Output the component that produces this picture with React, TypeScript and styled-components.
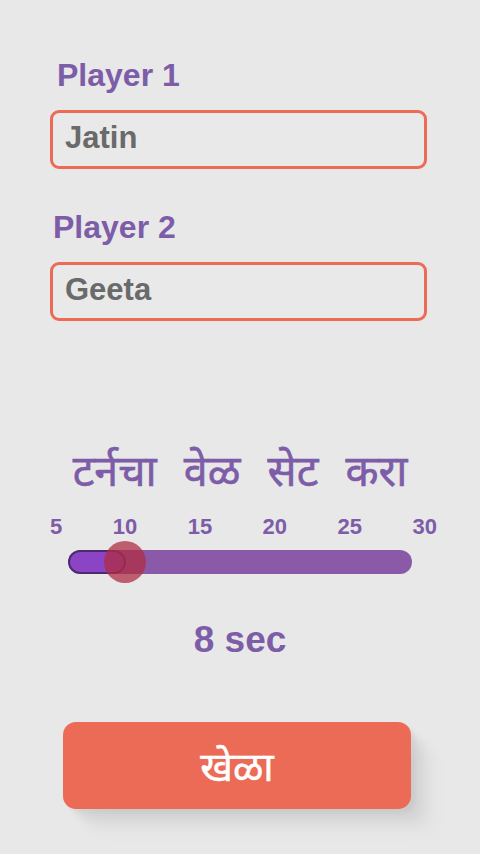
import React, { useState } from 'react';
import styled, { createGlobalStyle } from 'styled-components';

const GlobalStyle = createGlobalStyle`
  html, body {
    margin: 0;
    padding: 0;
    background: #e8e8e8;
  }
  body {
    font-family: 'Liberation Sans', Arial, 'Noto Sans', sans-serif;
  }
`;

const purple = '#7d5ca8';
const coral = '#ec6b57';

const Screen = styled.div`
  width: 480px;
  height: 854px;
  box-sizing: border-box;
  padding: 58px 50px 0 50px;
  display: flex;
  flex-direction: column;
  overflow: hidden;
`;

const Field = styled.div<{ $indent: number }>`
  display: flex;
  flex-direction: column;
  margin-bottom: 41px;
  label {
    padding-left: ${p => p.$indent}px;
  }
`;

const Label = styled.label`
  font-size: 32px;
  font-weight: 700;
  color: ${purple};
  line-height: 34px;
  margin-bottom: 18px;
`;

const NameInput = styled.input`
  width: 377px;
  height: 59px;
  box-sizing: border-box;
  border: 3px solid ${coral};
  border-radius: 9px;
  background: #e9e9e9;
  padding: 0 12px 3px 12px;
  font-family: 'Liberation Sans', Arial, sans-serif;
  font-size: 31px;
  font-weight: 700;
  color: #6a6a6a;
  outline: none;
`;

const Heading = styled.h2`
  margin: 80px 0 0 0;
  text-align: center;
  font-family: 'Noto Sans', 'Noto Sans Devanagari', sans-serif;
  font-size: 43px;
  font-weight: 400;
  color: ${purple};
  -webkit-text-stroke: 0.6px ${purple};
  word-spacing: 16px;
  line-height: 56px;
  width: 380px;
`;

const Ticks = styled.div`
  display: flex;
  justify-content: space-between;
  margin: 17px 0 0 0;
  width: 387px;
  font-size: 22px;
  font-weight: 700;
  color: ${purple};
  line-height: 24px;
`;

const SliderWrap = styled.div`
  position: relative;
  margin: 11px 0 0 18px;
  width: 344px;
  height: 24px;
`;

const Track = styled.div`
  height: 24px;
  border-radius: 12px;
  background: #8a5aa9;
  overflow: hidden;
`;

const Fill = styled.div`
  height: 100%;
  box-sizing: border-box;
  background: #8b44c4;
  border: 2px solid #4e2a6e;
  border-radius: 12px;
`;

const Thumb = styled.div`
  position: absolute;
  top: 50%;
  width: 42px;
  height: 42px;
  border-radius: 50%;
  background: rgba(176, 44, 66, 0.74);
  transform: translate(-50%, -50%);
`;

const Value = styled.div`
  margin-top: 44px;
  width: 380px;
  text-align: center;
  font-size: 37px;
  font-weight: 700;
  color: ${purple};
  line-height: 44px;
`;

const ButtonRow = styled.div`
  margin-top: 60px;
  margin-left: 13px;
`;

const PlayButton = styled.button`
  width: 348px;
  height: 87px;
  border: none;
  border-radius: 13px;
  background: ${coral};
  color: #fff;
  font-family: 'Noto Sans', 'Noto Sans Devanagari', sans-serif;
  font-size: 40px;
  -webkit-text-stroke: 0.5px #fff;
  cursor: pointer;
  box-shadow:
    4px 4px 4px rgba(0, 0, 0, 0.04),
    10px 10px 8px rgba(0, 0, 0, 0.035),
    17px 17px 12px rgba(0, 0, 0, 0.03),
    25px 25px 16px rgba(0, 0, 0, 0.025);
`;

const App: React.FC = () => {
  const [p1, setP1] = useState('Jatin');
  const [p2, setP2] = useState('Geeta');
  const min = 5;
  const max = 30;
  const value = 8;
  const pct = ((value - min) / (max - min)) * 100;

  return (
    <>
      <GlobalStyle />
      <Screen>
        <Field $indent={7}>
          <Label>Player 1</Label>
          <NameInput value={p1} onChange={e => setP1(e.target.value)} />
        </Field>
        <Field $indent={3}>
          <Label>Player 2</Label>
          <NameInput value={p2} onChange={e => setP2(e.target.value)} />
        </Field>
        <Heading>टर्नचा वेळ सेट करा</Heading>
        <Ticks>
          {[5, 10, 15, 20, 25, 30].map(t => (
            <span key={t}>{t}</span>
          ))}
        </Ticks>
        <SliderWrap>
          <Track>
            <Fill style={{ width: `${pct + 5}%` }} />
          </Track>
          <Thumb style={{ left: `${pct + 4.5}%` }} />
        </SliderWrap>
        <Value>{value} sec</Value>
        <ButtonRow>
          <PlayButton>खेळा</PlayButton>
        </ButtonRow>
      </Screen>
    </>
  );
};

export default App;
